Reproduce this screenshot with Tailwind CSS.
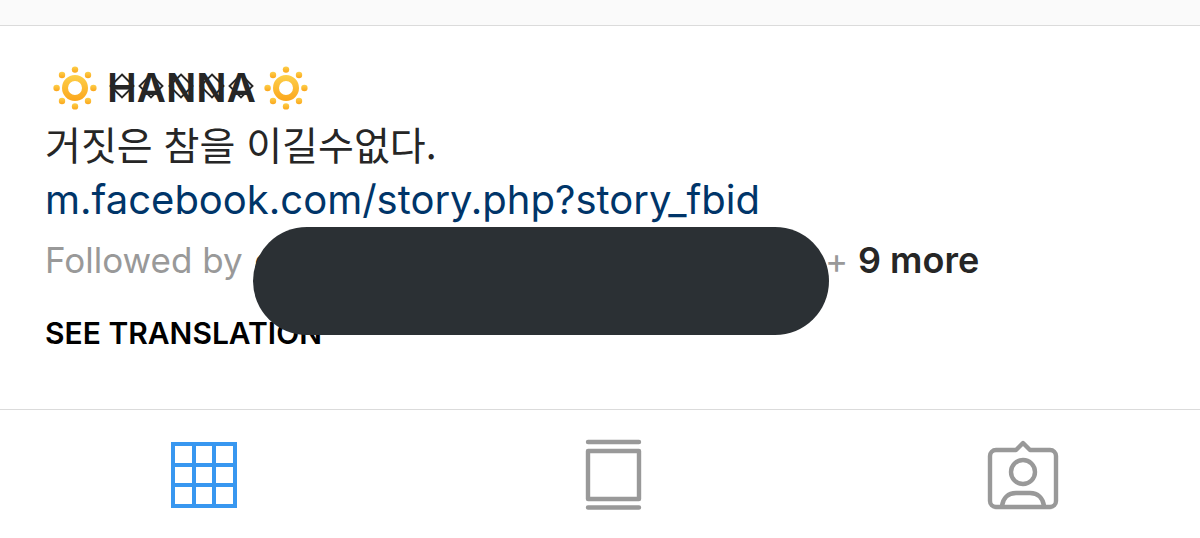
<!DOCTYPE html>
<html lang="en">
<head>
  <meta charset="UTF-8" />
  <meta name="viewport" content="width=device-width, initial-scale=1.0"/>
  <title>HANNA</title>
  <script src="https://cdn.jsdelivr.net/npm/@tailwindcss/browser@4"></script>
</head>
<body class="bg-white text-[#262626] font-['Inter','Noto_Sans_CJK_KR',sans-serif] overflow-x-hidden">

<!-- Shared shapes -->
<svg class="absolute size-0" aria-hidden="true">
  <defs>
    <linearGradient id="sunFill" x1="0" y1="0" x2="0" y2="1">
      <stop offset="0" stop-color="#fdd04a"/>
      <stop offset="1" stop-color="#fba61c"/>
    </linearGradient>
    <symbol id="sun" viewBox="0 0 44 44">
      <path d="M22 9a13 13 0 1 1 0 26a13 13 0 1 1 0-26zM22 15a7 7 0 1 0 0 14a7 7 0 1 0 0-14z" fill="url(#sunFill)"/>
      <g fill="url(#sunFill)">
        <circle cx="22" cy="3.6" r="3.2"/>
        <circle cx="22" cy="40.4" r="3.2"/>
        <circle cx="3.6" cy="22" r="3.2"/>
        <circle cx="40.4" cy="22" r="3.2"/>
        <circle cx="9" cy="9" r="3.2"/>
        <circle cx="35" cy="9" r="3.2"/>
        <circle cx="9" cy="35" r="3.2"/>
        <circle cx="35" cy="35" r="3.2"/>
      </g>
    </symbol>
    <symbol id="diamond" viewBox="0 0 28 28">
      <path d="M14 2.500L25.500 14L14 25.500L2.500 14z" fill="none" stroke="#262626" stroke-width="1.900"/>
    </symbol>
  </defs>
</svg>

<header class="h-[26px] bg-[#fafafa] border-b border-[#dbdbdb]"></header>

<!-- Bio -->
<main class="relative px-[45px] pt-8 h-[383px]">
  <h1 class="flex items-center gap-2 pl-2 h-14 text-[40px] leading-[56px] font-semibold">
    <svg class="size-11 mt-1" aria-hidden="true"><use href="#sun"/></svg>
    <span class="flex pt-1 pl-0.5">
      <span class="relative">H<svg class="absolute left-1/2 top-3 size-7 -translate-x-1/2"><use href="#diamond"/></svg></span>
      <span class="relative">A<svg class="absolute left-1/2 top-3 size-7 -translate-x-1/2"><use href="#diamond"/></svg></span>
      <span class="relative">N<svg class="absolute left-1/2 top-3 size-7 -translate-x-1/2"><use href="#diamond"/></svg></span>
      <span class="relative">N<svg class="absolute left-1/2 top-3 size-7 -translate-x-1/2"><use href="#diamond"/></svg></span>
      <span class="relative">A<svg class="absolute left-1/2 top-3 size-7 -translate-x-1/2"><use href="#diamond"/></svg></span>
    </span>
    <svg class="size-11 mt-1" aria-hidden="true"><use href="#sun"/></svg>
  </h1>
  <p lang="ko" class="font-['Noto_Sans_CJK_KR',sans-serif] text-[39px] leading-[58px]">거짓은 참을 이길수없다.</p>
  <a href="#" class="block w-fit text-[40px] leading-[56px] text-[#003569]">m.facebook.com/story.php?story_fbid</a>

  <div class="flex text-[35px] leading-[64px] text-[#999]">
    <p class="w-[780px] whitespace-nowrap">Followed by <span class="ml-0.5 font-semibold text-[#262626]">c</span></p>
    <p class="whitespace-nowrap">+ <span class="text-[36px] font-semibold text-[#262626]">9 more</span></p>
  </div>
  <button class="mt-5 block text-[30px] leading-[42px] font-semibold text-black">SEE TRANSLATION</button>

  <!-- Marker over the follower names -->
  <div class="absolute left-[253px] top-[201px] w-[576px] h-[108px] rounded-full bg-[#2b3034]"></div>
</main>

<!-- Tabs -->
<nav class="border-t border-[#dbdbdb]">
  <div class="-mr-7 grid grid-cols-3 justify-items-center pt-7">
    <button class="text-[#3897f0]" aria-label="Grid">
      <svg class="size-[74px]" viewBox="0 0 74 74" fill="none" stroke="currentColor" stroke-width="4">
        <path d="M5 6h62v62H5zM26 6v62M46 6v62M5 27h62M5 47h62"/>
      </svg>
    </button>
    <button class="text-[#999]" aria-label="Feed">
      <svg class="size-[74px]" viewBox="0 0 74 74" fill="none" stroke="currentColor" stroke-width="4.400" stroke-linecap="round" stroke-linejoin="round">
        <path d="M11 4h51M11 69.500h51M11 13h51v48H11z"/>
      </svg>
    </button>
    <button class="text-[#999]" aria-label="Tagged">
      <svg class="size-[74px]" viewBox="0 0 74 74" fill="none" stroke="currentColor" stroke-width="4.400" stroke-linecap="round" stroke-linejoin="round">
        <path d="M10 12h20l7-7 7 7h20a6 6 0 0 1 6 6v45a6 6 0 0 1-6 6H10a6 6 0 0 1-6-6V18a6 6 0 0 1 6-6z"/>
        <circle cx="37" cy="34" r="12"/>
        <path d="M16 68c1-8 6-13 14-13h14c8 0 13 5 14 13"/>
      </svg>
    </button>
  </div>
</nav>

</body>
</html>
